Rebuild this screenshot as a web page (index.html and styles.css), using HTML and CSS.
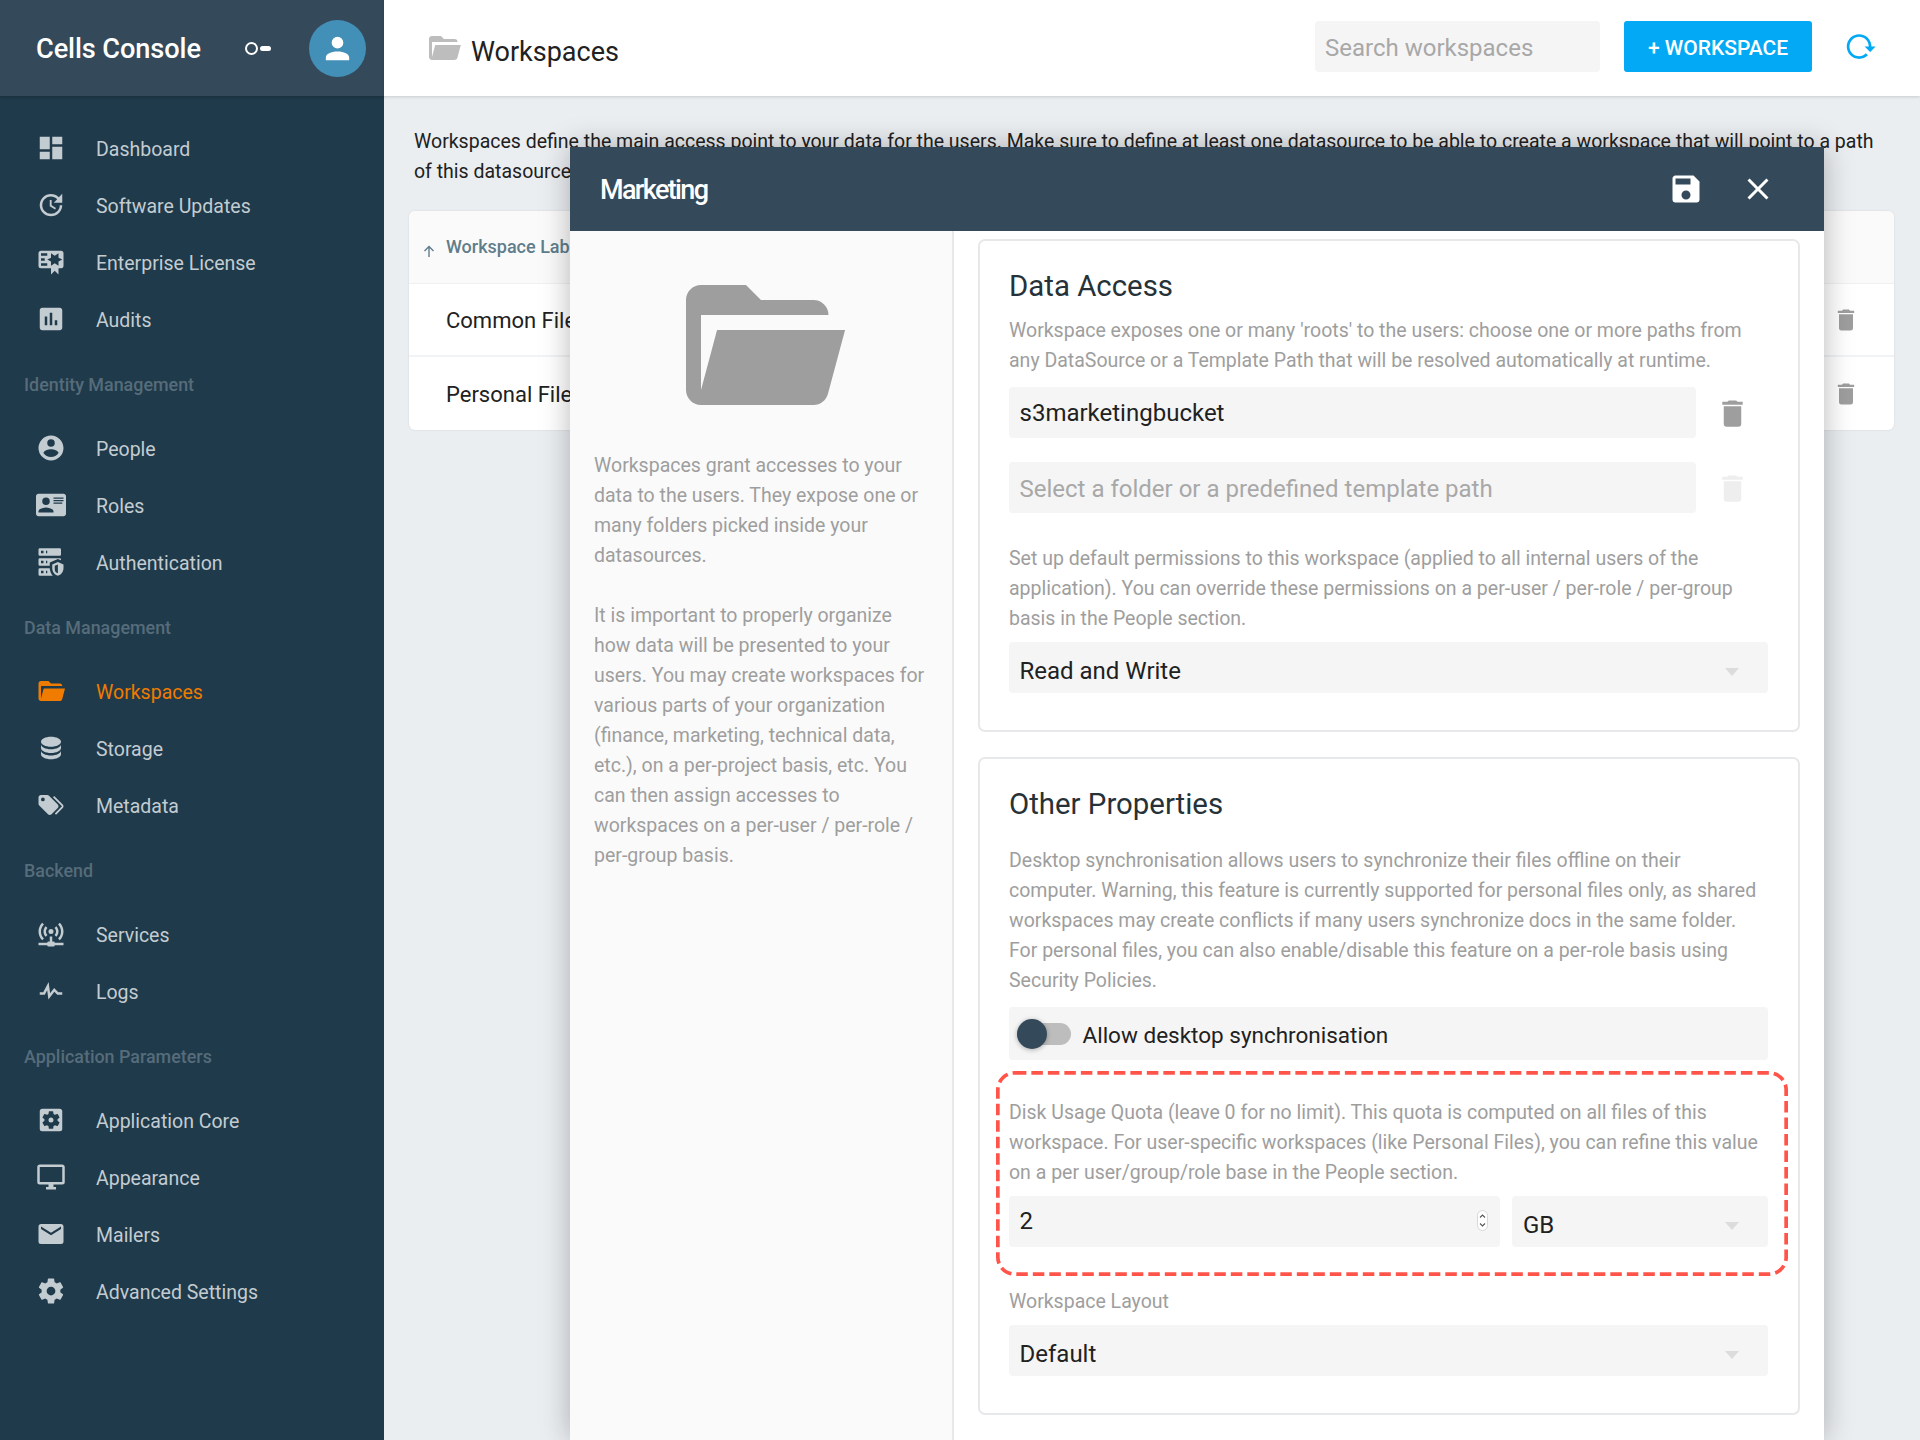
FILE: index.html
```html
<!DOCTYPE html>
<html lang="en">
<head>
<meta charset="utf-8">
<title>Cells Console - Workspaces</title>
<link rel="stylesheet" href="styles.css">
</head>
<body>
<svg class="sprite" xmlns="http://www.w3.org/2000/svg">
<symbol id="i-dashboard" viewBox="0 0 24 24"><path d="M13,3V9H21V3M13,21H21V11H13M3,21H11V15H3M3,13H11V3H3V13Z"/></symbol>
<symbol id="i-update" viewBox="0 0 24 24"><path d="M21,10.12H14.22L16.96,7.3C14.23,4.6 9.81,4.5 7.08,7.2C4.35,9.91 4.35,14.28 7.08,17C9.81,19.7 14.23,19.7 16.96,17C18.32,15.65 19,14.08 19,12.1H21C21,14.08 20.12,16.65 18.36,18.39C14.85,21.87 9.15,21.87 5.64,18.39C2.14,14.92 2.11,9.28 5.62,5.81C9.13,2.34 14.76,2.34 18.27,5.81L21,3V10.12M12.5,8V12.25L16,14.33L15.28,15.54L11,13V8H12.5Z"/></symbol>
<symbol id="i-cert" viewBox="0 0 24 24"><path d="M4,3C2.89,3 2,3.89 2,5V15A2,2 0 0,0 4,17H12V22L15,19L18,22V17H20A2,2 0 0,0 22,15V8L22,6V5A2,2 0 0,0 20,3H16V3H4M12,5L15,7L18,5V8.5L21,10L18,11.5V15L15,13L12,15V11.5L9,10L12,8.5V5M4,5H9V7H4V5M4,9H7V11H4V9M4,13H9V15H4V13Z"/></symbol>
<symbol id="i-poll" viewBox="0 0 24 24"><path d="M5 3H19C20.1 3 21 3.9 21 5V19C21 20.1 20.1 21 19 21H5C3.9 21 3 20.1 3 19V5C3 3.9 3.9 3 5 3M9 17V10H7V17H9M13 17V7H11V17H13M17 17V13H15V17H17Z"/></symbol>
<symbol id="i-account-circle" viewBox="0 0 24 24"><path d="M12,19.2C9.5,19.2 7.29,17.92 6,16C6.03,14 10,12.9 12,12.9C14,12.9 17.97,14 18,16C16.71,17.92 14.5,19.2 12,19.2M12,5A3,3 0 0,1 15,8A3,3 0 0,1 12,11A3,3 0 0,1 9,8A3,3 0 0,1 12,5M12,2A10,10 0 0,0 2,12A10,10 0 0,0 12,22A10,10 0 0,0 22,12C22,6.47 17.5,2 12,2Z"/></symbol>
<symbol id="i-card" viewBox="0 0 24 24"><path d="M2,3H22C23.05,3 24,3.95 24,5V19C24,20.05 23.05,21 22,21H2C0.95,21 0,20.05 0,19V5C0,3.95 0.95,3 2,3M14,6V7H22V6H14M14,8V9H21.5L22,9V8H14M14,10V11H21V10H14M8,13.91C6,13.91 2,15 2,17V18H14V17C14,15 10,13.91 8,13.91M8,6A3,3 0 0,0 5,9A3,3 0 0,0 8,12A3,3 0 0,0 11,9A3,3 0 0,0 8,6Z"/></symbol>
<symbol id="i-server" viewBox="0 0 24 24"><path d="M3,1H19A1,1 0 0,1 20,2V6A1,1 0 0,1 19,7H3A1,1 0 0,1 2,6V2A1,1 0 0,1 3,1M3,9H19A1,1 0 0,1 20,10V10.67L17.5,9.56L11,12.44V15H3A1,1 0 0,1 2,14V10A1,1 0 0,1 3,9M3,17H11C11.06,19.25 12,21.4 13.46,23H3A1,1 0 0,1 2,22V18A1,1 0 0,1 3,17M8,5H9V3H8V5M8,13H9V11H8V13M8,21H9V19H8V21M4,3V5H6V3H4M4,11V13H6V11H4M4,19V21H6V19H4M17.5,12L22,14V17C22,19.78 20.08,22.37 17.5,23C14.92,22.37 13,19.78 13,17V14L17.5,12M17.5,13.94L15,15.06V17.72C15,19.26 16.07,20.7 17.5,21.06V13.94Z"/></symbol>
<symbol id="i-folder" viewBox="0 0 24 24"><path d="M19,20H4C2.89,20 2,19.1 2,18V6C2,4.89 2.89,4 4,4H10L12,6H19A2,2 0 0,1 21,8H21L4,8V18L6.14,10H23.21L20.93,18.5C20.7,19.37 19.92,20 19,20Z"/></symbol>
<symbol id="i-db" viewBox="0 0 24 24"><path d="M12,3C7.58,3 4,4.79 4,7C4,9.21 7.58,11 12,11C16.42,11 20,9.21 20,7C20,4.79 16.42,3 12,3M4,9V12C4,14.21 7.58,16 12,16C16.42,16 20,14.21 20,12V9C20,11.21 16.42,13 12,13C7.58,13 4,11.21 4,9M4,14V17C4,19.21 7.58,21 12,21C16.42,21 20,19.21 20,17V14C20,16.21 16.42,18 12,18C7.58,18 4,16.21 4,14Z"/></symbol>
<symbol id="i-tags" viewBox="0 0 24 24"><path d="M5.5,9A1.5,1.5 0 0,0 7,7.5A1.5,1.5 0 0,0 5.5,6A1.5,1.5 0 0,0 4,7.5A1.5,1.5 0 0,0 5.5,9M17.41,11.58C17.77,11.94 18,12.44 18,13C18,13.55 17.78,14.05 17.41,14.41L12.41,19.41C12.05,19.77 11.55,20 11,20C10.45,20 9.95,19.78 9.58,19.41L2.59,12.42C2.22,12.05 2,11.55 2,11V6C2,4.89 2.89,4 4,4H9C9.55,4 10.05,4.22 10.41,4.58L17.41,11.58M13.54,5.71L14.54,4.71L21.41,11.58C21.78,11.94 22,12.45 22,13C22,13.55 21.78,14.05 21.42,14.41L16.04,19.79L15.04,18.79L20.75,13L13.54,5.71Z"/></symbol>
<symbol id="i-antenna" viewBox="0 0 24 24"><path d="M4.93,2.93C3.12,4.74 2,7.24 2,10C2,12.76 3.12,15.26 4.93,17.07L6.34,15.66C4.89,14.22 4,12.22 4,10C4,7.79 4.89,5.78 6.34,4.34L4.93,2.93M19.07,2.93L17.66,4.34C19.11,5.78 20,7.79 20,10C20,12.22 19.11,14.22 17.66,15.66L19.07,17.07C20.88,15.26 22,12.76 22,10C22,7.24 20.88,4.74 19.07,2.93M7.76,5.76C6.67,6.85 6,8.35 6,10C6,11.65 6.67,13.15 7.76,14.24L9.17,12.83C8.45,12.11 8,11.11 8,10C8,8.89 8.45,7.89 9.17,7.17L7.76,5.76M16.24,5.76L14.83,7.17C15.55,7.89 16,8.89 16,10C16,11.11 15.55,12.11 14.83,12.83L16.24,14.24C17.33,13.15 18,11.65 18,10C18,8.35 17.33,6.85 16.24,5.76M12,8A2,2 0 0,0 10,10A2,2 0 0,0 12,12A2,2 0 0,0 14,10A2,2 0 0,0 12,8M11,14V18H10A1,1 0 0,0 9,19H2V21H9A1,1 0 0,0 10,22H14A1,1 0 0,0 15,21H22V19H15A1,1 0 0,0 14,18H13V14H11Z"/></symbol>
<symbol id="i-pulse" viewBox="0 0 24 24"><path d="M3,13H5.79L10.1,4.79L11.28,13.75L14.5,9.66L17.83,13H21V15H17L14.67,12.67L9.92,18.73L8.94,11.31L7,15H3V13Z"/></symbol>
<symbol id="i-settings-box" viewBox="0 0 24 24"><path d="M17.25,12C17.25,12.23 17.23,12.46 17.2,12.68L18.68,13.84C18.81,13.95 18.85,14.13 18.76,14.29L17.36,16.71C17.27,16.86 17.09,16.92 16.93,16.86L15.19,16.16C14.83,16.44 14.43,16.67 14,16.85L13.75,18.7C13.72,18.87 13.57,19 13.4,19H10.6C10.43,19 10.28,18.87 10.25,18.7L10,16.85C9.56,16.67 9.17,16.44 8.81,16.16L7.07,16.86C6.91,16.92 6.73,16.86 6.64,16.71L5.24,14.29C5.15,14.13 5.19,13.95 5.32,13.84L6.8,12.68C6.77,12.46 6.75,12.23 6.75,12C6.75,11.77 6.77,11.54 6.8,11.32L5.32,10.16C5.19,10.05 5.15,9.87 5.24,9.71L6.64,7.29C6.73,7.14 6.91,7.08 7.07,7.14L8.81,7.84C9.17,7.56 9.56,7.33 10,7.15L10.25,5.3C10.28,5.13 10.43,5 10.6,5H13.4C13.57,5 13.72,5.13 13.75,5.3L14,7.15C14.43,7.33 14.83,7.56 15.19,7.84L16.93,7.14C17.09,7.08 17.27,7.14 17.36,7.29L18.76,9.71C18.85,9.87 18.81,10.05 18.68,10.16L17.2,11.32C17.23,11.54 17.25,11.77 17.25,12M19,3H5C3.89,3 3,3.89 3,5V19A2,2 0 0,0 5,21H19A2,2 0 0,0 21,19V5C21,3.89 20.1,3 19,3M12,10C10.89,10 10,10.89 10,12A2,2 0 0,0 12,14A2,2 0 0,0 14,12C14,10.89 13.1,10 12,10Z"/></symbol>
<symbol id="i-monitor" viewBox="0 0 24 24"><path d="M21,16H3V4H21M21,2H3C1.89,2 1,2.89 1,4V16A2,2 0 0,0 3,18H10V20H8V22H16V20H14V18H21A2,2 0 0,0 23,16V4C23,2.89 22.1,2 21,2Z"/></symbol>
<symbol id="i-email" viewBox="0 0 24 24"><path d="M20,8L12,13L4,8V6L12,11L20,6M20,4H4C2.89,4 2,4.89 2,6V18A2,2 0 0,0 4,20H20A2,2 0 0,0 22,18V6C22,4.89 21.1,4 20,4Z"/></symbol>
<symbol id="i-gear" viewBox="0 0 24 24"><path d="M12,15.5A3.5,3.5 0 0,1 8.5,12A3.5,3.5 0 0,1 12,8.5A3.5,3.5 0 0,1 15.5,12A3.5,3.5 0 0,1 12,15.5M19.43,12.97C19.47,12.65 19.5,12.33 19.5,12C19.5,11.67 19.47,11.34 19.43,11L21.54,9.37C21.73,9.22 21.78,8.95 21.66,8.73L19.66,5.27C19.54,5.05 19.27,4.96 19.05,5.05L16.56,6.05C16.04,5.66 15.5,5.32 14.87,5.07L14.5,2.42C14.46,2.18 14.25,2 14,2H10C9.75,2 9.54,2.18 9.5,2.42L9.13,5.07C8.5,5.32 7.96,5.66 7.44,6.05L4.95,5.05C4.73,4.96 4.46,5.05 4.34,5.27L2.34,8.73C2.21,8.95 2.27,9.22 2.46,9.37L4.57,11C4.53,11.34 4.5,11.67 4.5,12C4.5,12.33 4.53,12.65 4.57,12.97L2.46,14.63C2.27,14.78 2.21,15.05 2.34,15.27L4.34,18.73C4.46,18.95 4.73,19.03 4.95,18.95L7.44,17.94C7.96,18.34 8.5,18.68 9.13,18.93L9.5,21.58C9.54,21.82 9.75,22 10,22H14C14.25,22 14.46,21.82 14.5,21.58L14.87,18.93C15.5,18.67 16.04,18.34 16.56,17.94L19.05,18.95C19.27,19.03 19.54,18.95 19.66,18.73L21.66,15.27C21.78,15.05 21.73,14.78 21.54,14.63L19.43,12.97Z"/></symbol>
<symbol id="i-account" viewBox="0 0 24 24"><path d="M12,4A4,4 0 0,1 16,8A4,4 0 0,1 12,12A4,4 0 0,1 8,8A4,4 0 0,1 12,4M12,14C16.42,14 20,15.79 20,18V20H4V18C4,15.79 7.58,14 12,14Z"/></symbol>
<symbol id="i-save" viewBox="0 0 24 24"><path d="M15,9H5V5H15M12,19A3,3 0 0,1 9,16A3,3 0 0,1 12,13A3,3 0 0,1 15,16A3,3 0 0,1 12,19M17,3H5C3.89,3 3,3.9 3,5V19A2,2 0 0,0 5,21H19A2,2 0 0,0 21,19V7L17,3Z"/></symbol>
<symbol id="i-close" viewBox="0 0 24 24"><path d="M19,6.41L17.59,5L12,10.59L6.41,5L5,6.41L10.59,12L5,17.59L6.41,19L12,13.41L17.59,19L19,17.59L13.41,12L19,6.41Z"/></symbol>
<symbol id="i-delete" viewBox="0 0 24 24"><path d="M19,4H15.5L14.5,3H9.5L8.5,4H5V6H19M6,19A2,2 0 0,0 8,21H16A2,2 0 0,0 18,19V7H6V19Z"/></symbol>
<symbol id="i-reload" viewBox="0 0 24 24"><path d="M2 12C2 16.97 6.03 21 11 21C13.39 21 15.68 20.06 17.4 18.4L15.9 16.9C14.63 18.25 12.86 19 11 19C4.76 19 1.64 11.46 6.05 7.05C10.46 2.64 18 5.77 18 12H15L19 16H19.1L23 12H20C20 7.03 15.97 3 11 3C6.03 3 2 7.03 2 12Z"/></symbol>
</svg>

<div class="app">
  <aside class="sidebar">
    <header class="brand">
      <span class="brand-name">Cells Console</span>
      <span class="brand-key"><span class="key-ring"></span><span class="key-pill"></span></span>
      <span class="avatar"><svg class="avatar-icon"><use href="#i-account"/></svg></span>
    </header>
    <nav class="nav">
      <a class="nav-item"><svg class="nav-icon"><use href="#i-dashboard"/></svg><span class="nav-text">Dashboard</span></a>
      <a class="nav-item"><svg class="nav-icon"><use href="#i-update"/></svg><span class="nav-text">Software Updates</span></a>
      <a class="nav-item"><svg class="nav-icon"><use href="#i-cert"/></svg><span class="nav-text">Enterprise License</span></a>
      <a class="nav-item"><svg class="nav-icon"><use href="#i-poll"/></svg><span class="nav-text">Audits</span></a>
      <div class="nav-section">Identity Management</div>
      <a class="nav-item"><svg class="nav-icon"><use href="#i-account-circle"/></svg><span class="nav-text">People</span></a>
      <a class="nav-item"><svg class="nav-icon"><use href="#i-card"/></svg><span class="nav-text">Roles</span></a>
      <a class="nav-item"><svg class="nav-icon"><use href="#i-server"/></svg><span class="nav-text">Authentication</span></a>
      <div class="nav-section">Data Management</div>
      <a class="nav-item nav-item-active"><svg class="nav-icon"><use href="#i-folder"/></svg><span class="nav-text">Workspaces</span></a>
      <a class="nav-item"><svg class="nav-icon"><use href="#i-db"/></svg><span class="nav-text">Storage</span></a>
      <a class="nav-item"><svg class="nav-icon"><use href="#i-tags"/></svg><span class="nav-text">Metadata</span></a>
      <div class="nav-section">Backend</div>
      <a class="nav-item"><svg class="nav-icon"><use href="#i-antenna"/></svg><span class="nav-text">Services</span></a>
      <a class="nav-item"><svg class="nav-icon"><use href="#i-pulse"/></svg><span class="nav-text">Logs</span></a>
      <div class="nav-section">Application Parameters</div>
      <a class="nav-item"><svg class="nav-icon"><use href="#i-settings-box"/></svg><span class="nav-text">Application Core</span></a>
      <a class="nav-item"><svg class="nav-icon"><use href="#i-monitor"/></svg><span class="nav-text">Appearance</span></a>
      <a class="nav-item"><svg class="nav-icon"><use href="#i-email"/></svg><span class="nav-text">Mailers</span></a>
      <a class="nav-item"><svg class="nav-icon"><use href="#i-gear"/></svg><span class="nav-text">Advanced Settings</span></a>
    </nav>
  </aside>

  <main class="main">
    <header class="topbar">
      <svg class="topbar-folder"><use href="#i-folder"/></svg>
      <h1 class="topbar-title">Workspaces</h1>
      <div class="search">Search workspaces</div>
      <div class="add-button">+ WORKSPACE</div>
      <svg class="reload"><use href="#i-reload"/></svg>
    </header>
    <p class="intro">Workspaces define the main access point to your data for the users. Make sure to define at least one datasource to be able to create a workspace that will point to a path of this datasource.</p>
    <section class="table">
      <div class="table-head"><svg class="sort-arrow" viewBox="0 0 12 12"><path d="M6 12V1.5M1.5 6 6 1.5 10.500 6"/></svg><span class="head-label">Workspace Label</span></div>
      <div class="table-row"><span class="row-label">Common Files</span><svg class="row-trash"><use href="#i-delete"/></svg></div>
      <div class="table-row table-row-last"><span class="row-label">Personal Files</span><svg class="row-trash"><use href="#i-delete"/></svg></div>
    </section>
  </main>

  <section class="modal">
    <header class="modal-head">
      <h2 class="modal-title">Marketing</h2>
      <svg class="modal-action"><use href="#i-save"/></svg>
      <svg class="modal-action modal-close"><use href="#i-close"/></svg>
    </header>
    <div class="modal-body">
      <aside class="help">
        <svg class="help-folder"><use href="#i-folder"/></svg>
        <p class="help-text">Workspaces grant accesses to your data to the users. They expose one or many folders picked inside your datasources.</p>
        <p class="help-text">It is important to properly organize how data will be presented to your users. You may create workspaces for various parts of your organization (finance, marketing, technical data, etc.), on a per-project basis, etc. You can then assign accesses to workspaces on a per-user / per-role / per-group basis.</p>
      </aside>
      <div class="forms">
        <section class="card">
          <h3 class="card-title">Data Access</h3>
          <p class="desc desc-first">Workspace exposes one or many 'roots' to the users: choose one or more paths from any DataSource or a Template Path that will be resolved automatically at runtime.</p>
          <div class="root-row">
            <div class="field">s3marketingbucket</div>
            <span class="root-action"><svg class="field-trash"><use href="#i-delete"/></svg></span>
          </div>
          <div class="root-row root-row-next">
            <div class="field field-placeholder">Select a folder or a predefined template path</div>
            <span class="root-action"><svg class="field-trash field-trash-off"><use href="#i-delete"/></svg></span>
          </div>
          <p class="desc desc-perms">Set up default permissions to this workspace (applied to all internal users of the application). You can override these permissions on a per-user / per-role / per-group basis in the People section.</p>
          <div class="field field-select">Read and Write<span class="caret"></span></div>
        </section>
        <section class="card card-next">
          <h3 class="card-title">Other Properties</h3>
          <p class="desc desc-second">Desktop synchronisation allows users to synchronize their files offline on their computer. Warning, this feature is currently supported for personal files only, as shared workspaces may create conflicts if many users synchronize docs in the same folder. For personal files, you can also enable/disable this feature on a per-role basis using Security Policies.</p>
          <div class="toggle-row">
            <span class="toggle"><span class="toggle-thumb"></span></span>
            <span class="toggle-label">Allow desktop synchronisation</span>
          </div>
          <div class="quota">
            <svg class="quota-outline"><rect class="quota-outline-rect"/></svg>
            <p class="desc">Disk Usage Quota (leave 0 for no limit). This quota is computed on all files of this workspace. For user-specific workspaces (like Personal Files), you can refine this value on a per user/group/role base in the People section.</p>
            <div class="quota-row">
              <div class="field field-number">2
                <span class="spinner"><svg class="spinner-icon" viewBox="0 0 9 19"><path d="M2 6.500 4.500 4 7 6.500M2 12.500 4.500 15 7 12.500"/></svg></span>
              </div>
              <div class="field field-select field-unit">GB<span class="caret"></span></div>
            </div>
          </div>
          <div class="layout-label">Workspace Layout</div>
          <div class="field field-select">Default<span class="caret"></span></div>
        </section>
      </div>
    </div>
  </section>
</div>
</body>
</html>
```

FILE: styles.css
```css
* { box-sizing: border-box; }
html, body { margin: 0; padding: 0; }
body {
  width: 1920px;
  height: 1440px;
  overflow: hidden;
  font-family: Roboto, "Liberation Sans", sans-serif;
  font-size: 19.5px;
  color: #212121;
  background: #ebeef1;
}
.sprite { display: none; }
.app { position: relative; display: flex; width: 1920px; height: 1440px; overflow: hidden; }

/* Sidebar */
.sidebar { flex: 0 0 384px; background: #1f3a4a; color: #c3ccd1; }
.brand {
  display: flex;
  align-items: center;
  height: 96px;
  padding: 0 18px 0 36px;
  background: #34495a;
  box-shadow: 0 1px 3px rgba(0,0,0,.2);
}
.brand-name { margin-top: 2px; font-size: 27.2px; font-weight: 500; color: #fff; letter-spacing: -.1px; }
.brand-key { display: flex; align-items: center; margin-left: 44px; }
.key-ring { width: 13px; height: 13px; border: 2.5px solid #fff; border-radius: 50%; }
.key-pill { width: 11px; height: 5px; margin-left: 2px; border-radius: 3px; background: #fff; }
.avatar {
  display: flex;
  align-items: center;
  justify-content: center;
  width: 57px;
  height: 57px;
  margin-left: auto;
  border-radius: 50%;
  background: #428fb8;
}
.avatar-icon { width: 35px; height: 35px; fill: #fff; }
.nav { display: flex; flex-direction: column; padding-top: 23.5px; }
.nav-item {
  display: flex;
  align-items: center;
  height: 57px;
  padding-left: 36px;
  font-size: 19.5px;
}
.nav-text { margin-top: 2px; }
.nav-icon { flex: none; width: 30px; height: 30px; margin-right: 30px; fill: #c3ccd1; }
.nav-item-active { color: #ef7c00; }
.nav-item-active .nav-icon { fill: #ef7c00; }
.nav-section {
  display: flex;
  align-items: center;
  height: 72px;
  padding: 1px 0 0 24px;
  font-size: 17.9px;
  font-weight: 500;
  color: #566c7a;
}

/* Main */
.main { flex: 1; min-width: 0; }
.topbar {
  display: flex;
  align-items: center;
  height: 96px;
  padding: 0 43.5px 3px 42px;
  background: #fff;
  box-shadow: 0 1px 3px rgba(0,0,0,.15);
}
.topbar-folder { flex: none; width: 36px; height: 36px; margin-top: 3px; fill: #bdbdbd; }
.topbar-title { margin: 10.500px 0 0 9px; font-size: 27px; font-weight: 400; color: #212121; }
.search {
  display: flex;
  align-items: center;
  width: 285px;
  height: 51px;
  margin-left: auto;
  padding: 2px 0 0 10px;
  border-radius: 4px;
  background: #f5f5f5;
  font-size: 24px;
  color: #a8a8a8;
}
.add-button {
  display: flex;
  align-items: center;
  justify-content: center;
  width: 188px;
  height: 51px;
  margin-left: 24px;
  padding-top: 2px;
  border-radius: 3px;
  background: #03a9f4;
  color: #fff;
  font-size: 21px;
  font-weight: 500;
}
.reload { flex: none; width: 33px; height: 33px; margin-left: 31.5px; fill: #03a9f4; }
.intro { margin: 31px 30px 0 30px; line-height: 30px; color: #212121; }
.table {
  margin: 24px 26px 0 25px;
  border-radius: 6px;
  background: #fff;
  box-shadow: 0 0 2px rgba(0,0,0,.12);
  overflow: hidden;
}
.table-head {
  display: flex;
  align-items: center;
  height: 73px;
  padding-left: 14px;
  background: #fafafa;
  border-bottom: 1px solid #f0f0f0;
}
.sort-arrow { flex: none; width: 12px; height: 12px; margin: 8px 11px 0 0; fill: none; stroke: #607d8b; stroke-width: 1.4; }
.head-label { font-size: 18px; font-weight: 500; color: #607d8b; margin-top: -1px; }
.table-row {
  display: flex;
  align-items: center;
  justify-content: space-between;
  height: 73px;
  padding: 0 34px 0 37px;
  border-bottom: 2px solid #f2f3f5;
  font-size: 22px;
  color: #212121;
}
.row-label { margin-top: 1px; }
.table-row-last { border-bottom: 0; }
.row-trash { width: 28px; height: 30px; fill: #9e9e9e; }

/* Modal */
.modal {
  position: absolute;
  left: 570px;
  top: 147px;
  width: 1254px;
  height: 1293px;
  display: flex;
  flex-direction: column;
  background: #fff;
  box-shadow: 0 0 28px rgba(0,0,0,.28);
}
.modal-head {
  flex: none;
  display: flex;
  align-items: center;
  height: 84px;
  padding: 0 48px 0 30px;
  background: #34495a;
  color: #fff;
}
.modal-title { margin: 2px auto 0 0; font-size: 27px; font-weight: 500; letter-spacing: -1.65px; }
.modal-action { width: 36px; height: 36px; fill: #fff; }
.modal-close { margin-left: 36px; }
.modal-body { flex: 1; display: flex; min-height: 0; }
.help {
  flex: 0 0 384px;
  padding: 24px 24px 0 24px;
  background: #fafafa;
  border-right: 2px solid #e6e8ea;
}
.help-folder { display: block; width: 180px; height: 180px; margin: 0 auto 16px; fill: #9e9e9e; }
.help-text { margin: 0 0 30px; line-height: 30px; color: #9e9e9e; }
.forms { flex: 1; padding: 8px 24px 0 24px; }
.card {
  padding: 26px 30px 37px 29px;
  border: 2px solid #e6e8ea;
  border-radius: 7px;
  background: #fff;
}
.card-next { margin-top: 25px; }
.card-title { margin: 0 0 -1px; padding-top: 1px; font-size: 29.4px; font-weight: 400; line-height: 36px; color: #263238; }
.desc { margin: 0; line-height: 30px; color: #9e9e9e; }
.desc-first { margin: 12px 0 -1px; padding-top: 1px; }
.desc-second { margin: 24px 0 -1px; padding-top: 1px; }
.desc-perms { margin: 30px 0 8px; padding-top: 1px; }
.root-row { display: flex; margin-top: 12px; }
.root-row-next { margin-top: 24px; }
.root-action { flex: 0 0 72px; display: flex; align-items: center; justify-content: center; }
.field-trash { width: 35px; height: 35px; margin-top: 2px; fill: #9e9e9e; }
.field-trash-off { fill: #eeeeee; }
.field {
  position: relative;
  flex: 1;
  display: flex;
  align-items: center;
  height: 51px;
  padding-left: 10.5px;
  border-radius: 4px;
  background: #f5f5f5;
  font-size: 24px;
  color: #212121;
}
.field-placeholder { color: #a8a8a8; padding-top: 2px; }
.field-select { padding-top: 6px; }
.caret {
  position: absolute;
  right: 29px;
  top: 26px;
  border-left: 7px solid transparent;
  border-right: 7px solid transparent;
  border-top: 8px solid #dcdcdc;
}
.toggle-row {
  display: flex;
  align-items: center;
  height: 53px;
  margin-top: 12px;
  padding-left: 7.5px;
  border-radius: 4px;
  background: #f5f5f5;
}
.toggle { position: relative; flex: none; width: 54px; height: 22px; border-radius: 11px; background: #bdbdbd; }
.toggle-thumb {
  position: absolute;
  left: 0;
  top: -4px;
  width: 30px;
  height: 30px;
  border-radius: 50%;
  background: #34495a;
  box-shadow: 0 1px 5px rgba(0,0,0,.3);
}
.toggle-label { margin: 2px 0 0 12px; font-size: 22.5px; color: #212121; }
.quota {
  position: relative;
  margin: 11px -20px 0 -13px;
  padding: 27px 20px 29px 13px;
}
.quota > .desc { margin-bottom: -1px; }
.quota-outline { position: absolute; left: 0; top: 0; width: 100%; height: 100%; pointer-events: none; }
.quota-outline-rect {
  x: 1.85px;
  y: 1.85px;
  width: calc(100% - 3.7px);
  height: calc(100% - 3.7px);
  rx: 17px;
  ry: 17px;
  fill: none;
  stroke: #ff5449;
  stroke-width: 3.7px;
  stroke-dasharray: 11.5 5;
}
.quota-row { display: flex; gap: 12.4px; margin-top: 9px; }
.field-number { flex: 0 0 491px; padding-bottom: 2px; }
.field-unit { flex: 1; }
.spinner {
  position: absolute;
  right: 12px;
  top: 14px;
  width: 11px;
  height: 21px;
  border: 1px solid #d8d8d8;
  border-radius: 6px;
  background: #fff;
}
.spinner-icon { display: block; width: 9px; height: 19px; fill: none; stroke: #555; stroke-width: 1.1; }
.layout-label { margin: 10px 0 8px; padding-top: 1px; line-height: 30px; color: #9e9e9e; }
```
